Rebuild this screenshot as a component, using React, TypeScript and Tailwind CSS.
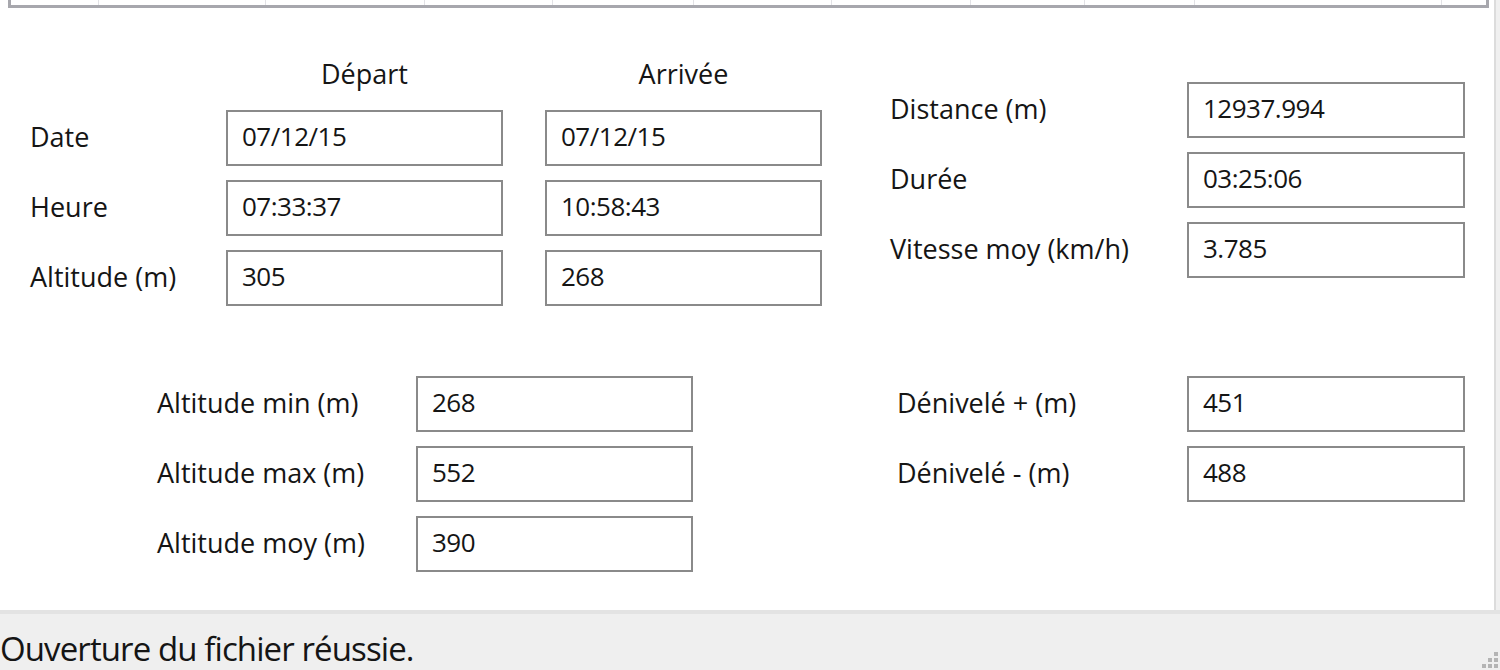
import React from 'react'

const FONT = "font-['Open_Sans','Noto_Sans',sans-serif]"

// column dividers of the list view cut off at the top edge
const COLUMN_EDGES = [96, 263, 422, 550, 691, 829, 968, 1082, 1192, 1439, 1488]

interface FieldProps {
  value: string
  width?: string
}

function Field({ value, width = 'w-[277px]' }: FieldProps) {
  return (
    <div
      className={`${width} h-[56px] shrink-0 border-2 border-[#8a8a8a] bg-white flex items-center pl-[14px] pb-[4px] text-[26px] tracking-[-0.5px] text-[#151515]`}
    >
      {value}
    </div>
  )
}

function Label({ text, width }: { text: string; width: string }) {
  return <div className={`${width} shrink-0 text-[27px] text-[#151515] pb-[2px]`}>{text}</div>
}

function ListViewStrip() {
  let prev = 8
  return (
    <div className="h-[8px] flex">
      <div className="ml-[8px] w-[1481px] h-[8px] border-x-[3px] border-b-[3px] border-[#a7a7ad] flex">
        {COLUMN_EDGES.slice(0, -1).map((edge) => {
          const w = edge - prev
          prev = edge
          return (
            <div
              key={edge}
              className="h-full border-r border-[#e2e2e6] shrink-0"
              style={{ width: w }}
            />
          )
        })}
      </div>
    </div>
  )
}

export default function App() {
  const departArrivee = [
    { label: 'Date', depart: '07/12/15', arrivee: '07/12/15' },
    { label: 'Heure', depart: '07:33:37', arrivee: '10:58:43' },
    { label: 'Altitude (m)', depart: '305', arrivee: '268' },
  ]
  const totals = [
    { label: 'Distance (m)', value: '12937.994' },
    { label: 'Durée', value: '03:25:06' },
    { label: 'Vitesse moy (km/h)', value: '3.785' },
  ]
  const altitudes = [
    { label: 'Altitude min (m)', value: '268' },
    { label: 'Altitude max (m)', value: '552' },
    { label: 'Altitude moy (m)', value: '390' },
  ]
  const denivele = [
    { label: 'Dénivelé + (m)', value: '451' },
    { label: 'Dénivelé - (m)', value: '488' },
  ]

  return (
    <div className={`${FONT} w-[1500px] h-[670px] bg-[#f0f0f0] flex flex-col overflow-hidden`}>
      {/* Main white panel */}
      <div className="w-[1496px] h-[610px] bg-white border-r-2 border-[#dcdcdc] flex flex-col">
        <ListViewStrip />

        {/* Top section */}
        <div className="flex items-start">
          {/* Départ / Arrivée */}
          <div className="ml-[30px] mt-[52px] flex flex-col">
            <div className="flex h-[28px] items-center text-[27px] text-[#151515]">
              <div className="w-[196px] shrink-0" />
              <div className="w-[277px] shrink-0 text-center">Départ</div>
              <div className="w-[42px] shrink-0" />
              <div className="w-[277px] shrink-0 text-center">Arrivée</div>
            </div>
            <div className="mt-[22px] flex flex-col gap-[14px]">
              {departArrivee.map((row) => (
                <div key={row.label} className="flex items-center">
                  <Label text={row.label} width="w-[196px]" />
                  <Field value={row.depart} />
                  <div className="w-[42px] shrink-0" />
                  <Field value={row.arrivee} />
                </div>
              ))}
            </div>
          </div>

          {/* Distance / Durée / Vitesse */}
          <div className="ml-[68px] mt-[74px] flex flex-col gap-[14px]">
            {totals.map((row) => (
              <div key={row.label} className="flex items-center">
                <Label text={row.label} width="w-[297px]" />
                <Field value={row.value} width="w-[278px]" />
              </div>
            ))}
          </div>
        </div>

        {/* Bottom section */}
        <div className="mt-[70px] flex items-start">
          <div className="ml-[157px] flex flex-col gap-[14px]">
            {altitudes.map((row) => (
              <div key={row.label} className="flex items-center">
                <Label text={row.label} width="w-[259px]" />
                <Field value={row.value} />
              </div>
            ))}
          </div>
          <div className="ml-[204px] flex flex-col gap-[14px]">
            {denivele.map((row) => (
              <div key={row.label} className="flex items-center">
                <Label text={row.label} width="w-[290px]" />
                <Field value={row.value} width="w-[278px]" />
              </div>
            ))}
          </div>
        </div>
      </div>

      {/* Status bar */}
      <div className="relative h-[60px] border-t-[4px] border-[#e3e3e3] bg-[#efefef] flex items-center">
        <span className="text-[33px] tracking-[-0.9px] text-[#151515] leading-none mt-[12px]">
          Ouverture du fichier réussie.
        </span>
        <svg className="absolute right-[2px] bottom-0" width="22" height="22" viewBox="0 0 22 22">
          {[
            [18, 4],
            [12, 10],
            [18, 10],
            [6, 16],
            [12, 16],
            [18, 16],
          ].map(([x, y]) => (
            <rect key={`${x}-${y}`} x={x} y={y} width="4" height="4" fill="#b4b4b4" />
          ))}
        </svg>
      </div>
    </div>
  )
}
